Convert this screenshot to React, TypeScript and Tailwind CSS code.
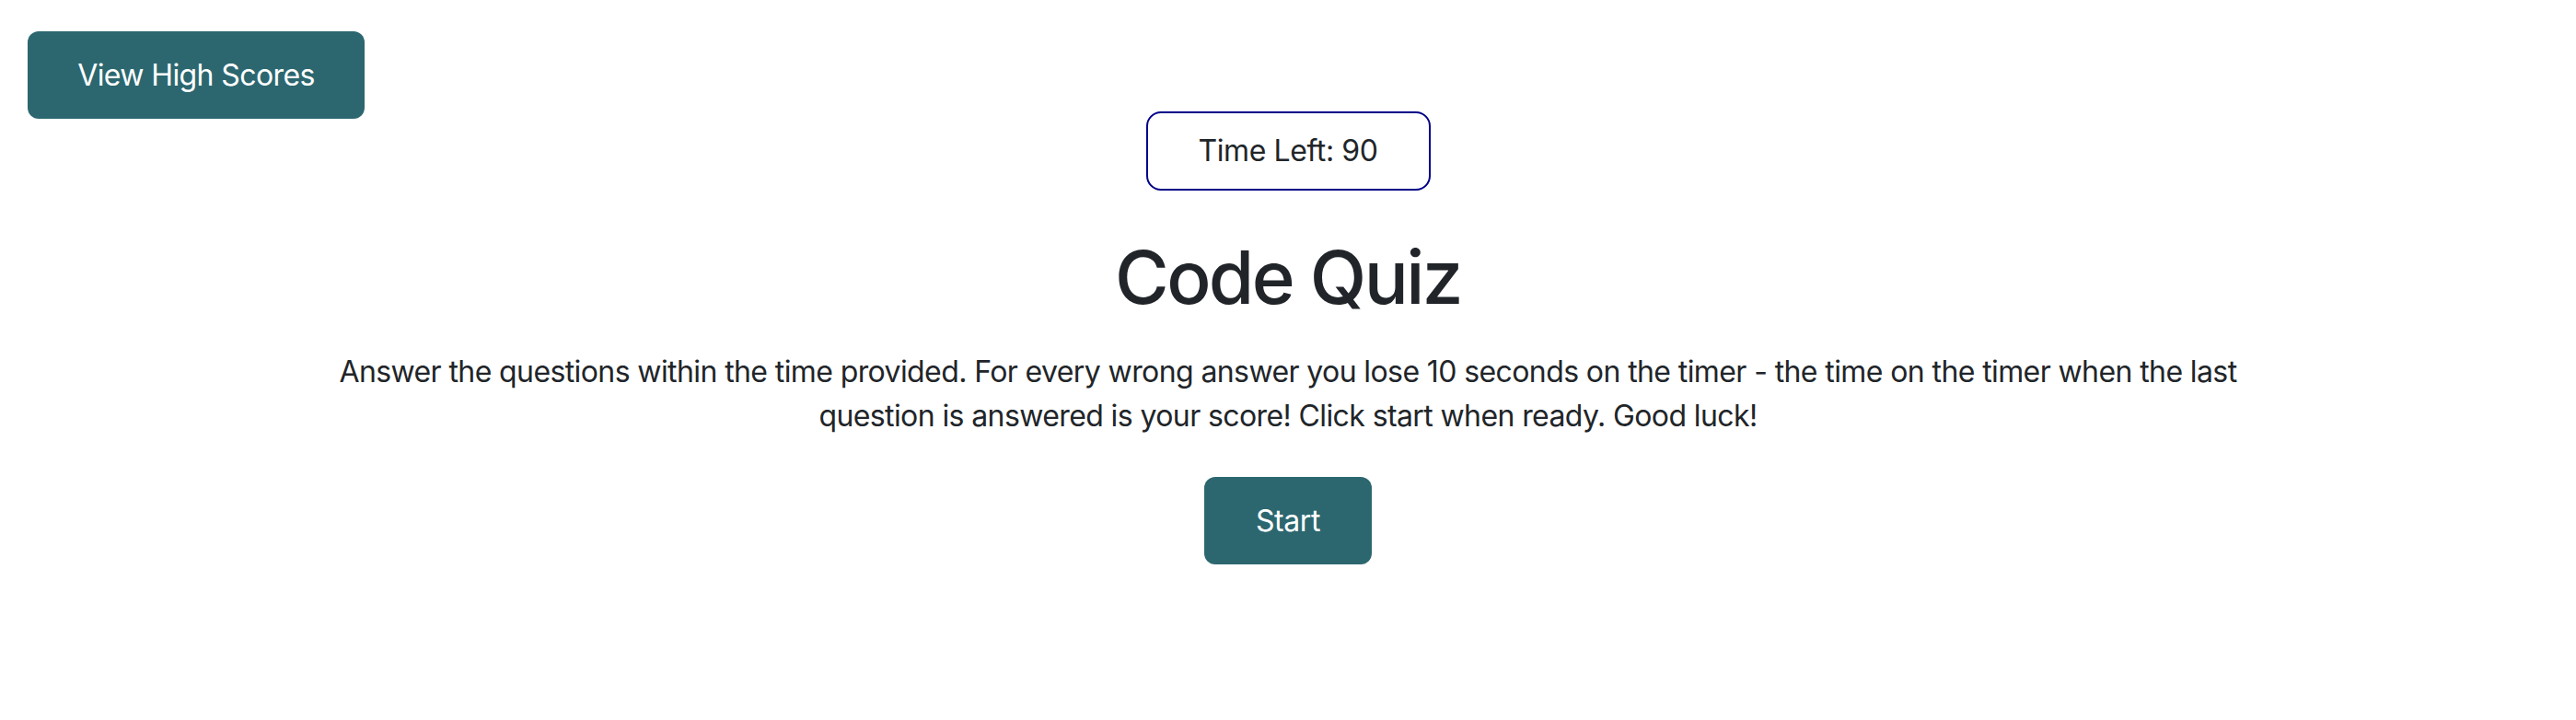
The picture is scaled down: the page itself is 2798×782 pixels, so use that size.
export default function App() {
  return (
    <div
      className="min-h-[782px] w-full bg-white text-[#212529]"
      style={{ fontFamily: "Inter, 'Noto Sans', Arial, sans-serif" }}
    >
      <div className="pl-[30px] pt-[34px]">
        <button className="flex h-[95px] w-[366px] items-center justify-center rounded-[12px] bg-[#2c6770] text-[32px] tracking-[-0.6px] text-white">
          View High Scores
        </button>
      </div>
      <main className="-mt-[8px] flex flex-col items-center">
        <div className="flex h-[86px] w-[309px] items-center justify-center rounded-[16px] border-2 border-[#000088] text-[32px] tracking-[-0.4px] text-[#212529]">
          Time Left: 90
        </div>
        <h1 className="mt-[46px] text-[80px] leading-[1.2] font-medium tracking-[-2.6px] text-[#212529]">
          Code Quiz
        </h1>
        <p className="mt-[31px] max-w-[2120px] text-center text-[32px] leading-[48px] tracking-[-0.6px] text-[#212529]">
          Answer the questions within the time provided. For every wrong answer you lose 10 seconds on the timer - the time on the timer when the last question is answered is your score! Click start when ready. Good luck!
        </p>
        <button className="mt-[42px] flex h-[95px] w-[182px] items-center justify-center rounded-[12px] bg-[#2c6770] text-[32px] tracking-[-0.4px] text-white">
          Start
        </button>
      </main>
    </div>
  );
}
